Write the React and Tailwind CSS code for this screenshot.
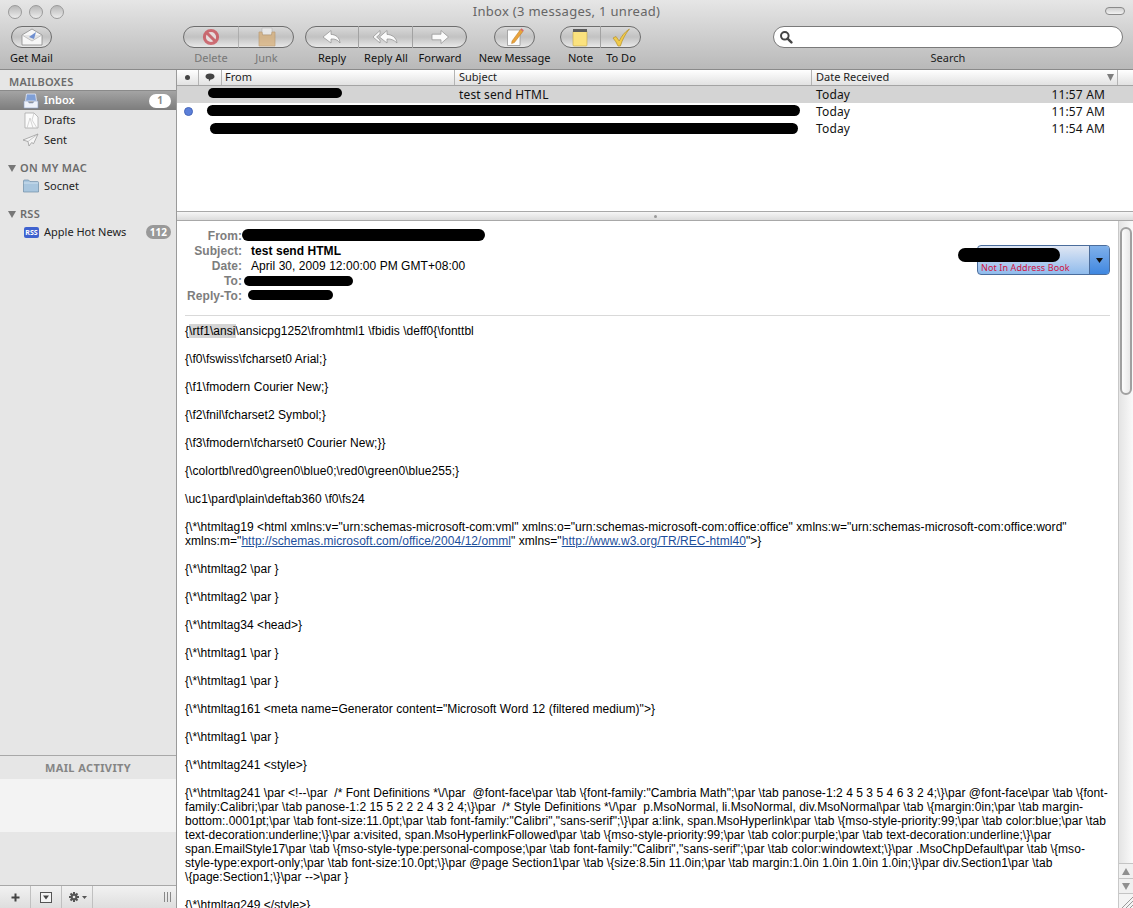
import React from "react";

const uiFont = "font-['Noto_Sans','Open_Sans',sans-serif]";

const bodyParagraphs = [
  ["{\\f0\\fswiss\\fcharset0 Arial;}"],
  ["{\\f1\\fmodern Courier New;}"],
  ["{\\f2\\fnil\\fcharset2 Symbol;}"],
  ["{\\f3\\fmodern\\fcharset0 Courier New;}}"],
  ["{\\colortbl\\red0\\green0\\blue0;\\red0\\green0\\blue255;}"],
  ["\\uc1\\pard\\plain\\deftab360 \\f0\\fs24"],
];

const afterLinks = [
  ["{\\*\\htmltag2 \\par }"],
  ["{\\*\\htmltag2 \\par }"],
  ["{\\*\\htmltag34 <head>}"],
  ["{\\*\\htmltag1 \\par }"],
  ["{\\*\\htmltag1 \\par }"],
  ['{\\*\\htmltag161 <meta name=Generator content="Microsoft Word 12 (filtered medium)">}'],
  ["{\\*\\htmltag1 \\par }"],
  ["{\\*\\htmltag241 <style>}"],
  [
    '{\\*\\htmltag241 \\par <!--\\par  /* Font Definitions *\\/\\par  @font-face\\par \\tab \\{font-family:"Cambria Math";\\par \\tab panose-1:2 4 5 3 5 4 6 3 2 4;\\}\\par @font-face\\par \\tab \\{font-',
    "family:Calibri;\\par \\tab panose-1:2 15 5 2 2 2 4 3 2 4;\\}\\par  /* Style Definitions *\\/\\par  p.MsoNormal, li.MsoNormal, div.MsoNormal\\par \\tab \\{margin:0in;\\par \\tab margin-",
    'bottom:.0001pt;\\par \\tab font-size:11.0pt;\\par \\tab font-family:"Calibri","sans-serif";\\}\\par a:link, span.MsoHyperlink\\par \\tab \\{mso-style-priority:99;\\par \\tab color:blue;\\par \\tab',
    "text-decoration:underline;\\}\\par a:visited, span.MsoHyperlinkFollowed\\par \\tab \\{mso-style-priority:99;\\par \\tab color:purple;\\par \\tab text-decoration:underline;\\}\\par",
    'span.EmailStyle17\\par \\tab \\{mso-style-type:personal-compose;\\par \\tab font-family:"Calibri","sans-serif";\\par \\tab color:windowtext;\\}\\par .MsoChpDefault\\par \\tab \\{mso-',
    "style-type:export-only;\\par \\tab font-size:10.0pt;\\}\\par @page Section1\\par \\tab \\{size:8.5in 11.0in;\\par \\tab margin:1.0in 1.0in 1.0in 1.0in;\\}\\par div.Section1\\par \\tab",
    "\\{page:Section1;\\}\\par -->\\par }",
  ],
  ["{\\*\\htmltag249 </style>}"],
];

// toolbar icons
const GetMailIcon = () => (
  <svg width="22" height="18" viewBox="0 0 22 18">
    <path d="M1 7 L11 1 L21 7 V17 H1 Z" fill="#f7f7f7" stroke="#8c8c8c" strokeWidth="0.8" />
    <path d="M1 7 L11 13 L21 7" fill="#e4e4e4" stroke="#b0b0b0" strokeWidth="0.7" />
    <path d="M8 9 L15 4 L13 11 Z" fill="#6f8fd0" />
  </svg>
);

const DeleteIcon = () => (
  <svg width="18" height="18" viewBox="0 0 18 18">
    <circle cx="9" cy="9" r="6.6" fill="#f3e6e6" stroke="#c9404a" strokeWidth="3" />
    <path d="M4.5 4.5 L13.5 13.5" stroke="#c9404a" strokeWidth="3" />
  </svg>
);

const JunkIcon = () => (
  <svg width="20" height="20" viewBox="0 0 20 20">
    <path d="M5 1 H15 V8 H5 Z" fill="#f2f2f2" stroke="#a8a8a8" strokeWidth="0.6" />
    <path d="M2 5 L5 5 L5.5 8 H14.5 L15 5 L18 5 V19 H2 Z" fill="#d9ae74" stroke="#b58b54" strokeWidth="0.7" />
  </svg>
);

const ReplyIcon = () => (
  <svg width="24" height="16" viewBox="0 0 24 16">
    <path d="M11 1.5 L3 8 L11 14 V10 C15 9.6 18 11 20 14 C19.6 8.6 16 5.6 11 5.4 Z" fill="#fbfbfb" stroke="#8f8f8f" strokeWidth="0.7" />
  </svg>
);

const ReplyAllIcon = () => (
  <svg width="28" height="16" viewBox="0 0 28 16">
    <path d="M8 1.5 L1 8 L8 14 V11 L4.6 8 L8 5 Z" fill="#fbfbfb" stroke="#8f8f8f" strokeWidth="0.7" />
    <path d="M15 1.5 L7.5 8 L15 14 V10 C19 9.6 22 11 25 14 C24.4 8.6 20 5.6 15 5.4 Z" fill="#fbfbfb" stroke="#8f8f8f" strokeWidth="0.7" />
  </svg>
);

const ForwardIcon = () => (
  <svg width="20" height="16" viewBox="0 0 20 16">
    <path d="M11 1.5 L18.5 8 L11 14.5 V10.8 H2 V5.2 H11 Z" fill="#fbfbfb" stroke="#8f8f8f" strokeWidth="0.7" />
  </svg>
);

const NewMessageIcon = () => (
  <svg width="20" height="20" viewBox="0 0 20 20">
    <path d="M2.5 3 H15 V18.5 H2.5 Z" fill="#fdfdfd" stroke="#8c8c8c" strokeWidth="0.7" />
    <path d="M7 14 L15.5 2.5 L18 4.4 L9.4 15.6 L6.6 16.6 Z" fill="#e9a33c" stroke="#b87a26" strokeWidth="0.5" />
    <path d="M15.5 2.5 L18 4.4 L18.8 3.2 L16.4 1.3 Z" fill="#d8636a" />
  </svg>
);

const NoteIcon = () => (
  <svg width="16" height="19" viewBox="0 0 16 19">
    <rect x="1" y="3" width="14" height="15" rx="1" fill="#fbe27e" stroke="#c4a94e" strokeWidth="0.6" />
    <rect x="1" y="1" width="14" height="3" fill="#5d5d5d" />
  </svg>
);

const TodoIcon = () => (
  <svg width="20" height="19" viewBox="0 0 20 19">
    <path d="M2 10 L5 8.5 L8.2 13 C10.6 8 13.6 4 18.4 1 C14.4 6 11.4 11.4 9.4 18 L7 18 C5.8 15 4 12.2 2 10 Z" fill="#f1cb4a" stroke="#b58f2a" strokeWidth="0.7" />
  </svg>
);

const Segment = ({ width, label, disabled, divider, children }) => (
  <div className="flex flex-col items-center" style={{ width }}>
    <div className={`h-[22px] w-full flex items-center justify-center ${divider ? "border-r border-[#a2a2a2]" : ""} ${disabled ? "opacity-70" : ""}`}>
      {children}
    </div>
    <div className="w-0 flex justify-center mt-[3px]">
      <span className={`whitespace-nowrap text-[11px] leading-[14px] ${disabled ? "text-[#777]" : "text-[#111]"}`}>{label}</span>
    </div>
  </div>
);

const ToolGroup = ({ width, className, children }) => (
  <div className={`relative ${className}`} style={{ width }}>
    <div className="absolute left-0 right-0 top-0 h-[22px] rounded-full border border-[#6e6e6e] bg-linear-to-b from-[#d8d8d8] via-[#c2c2c2] to-[#e8e8e8]" />
    <div className="relative flex">{children}</div>
  </div>
);

const Toolbar = () => (
  <div className={`h-[70px] shrink-0 flex flex-col border-b border-[#8a8a8a] bg-linear-to-b from-[#e6e6e6] to-[#b9b9b9] ${uiFont}`}>
    <div className="h-[26px] flex justify-between">
      <div className="flex-1 flex gap-[7px] pl-[8px] pt-[5px]">
        <div className="w-[14px] h-[14px] rounded-full border border-[#9a9a9a] bg-linear-to-b from-[#b8b8b8] to-[#ececec]" />
        <div className="w-[14px] h-[14px] rounded-full border border-[#9a9a9a] bg-linear-to-b from-[#b8b8b8] to-[#ececec]" />
        <div className="w-[14px] h-[14px] rounded-full border border-[#9a9a9a] bg-linear-to-b from-[#b8b8b8] to-[#ececec]" />
      </div>
      <div className="pt-[3px] text-[13px] leading-[16px] tracking-[0.3px] text-[#666] whitespace-nowrap">Inbox (3 messages, 1 unread)</div>
      <div className="flex-1 flex justify-end pr-[8px] pt-[7px]">
        <div className="w-[20px] h-[8px] rounded-full border border-[#8a8a8a] bg-linear-to-b from-[#cfcfcf] to-[#f2f2f2]" />
      </div>
    </div>
    <div className="flex pl-[11px]">
      <ToolGroup width={41}>
        <Segment width={41} label="Get Mail"><GetMailIcon /></Segment>
      </ToolGroup>
      <ToolGroup width={111} className="ml-[131px]">
        <Segment width={56} label="Delete" disabled divider><DeleteIcon /></Segment>
        <Segment width={55} label="Junk" disabled><JunkIcon /></Segment>
      </ToolGroup>
      <ToolGroup width={162} className="ml-[11px]">
        <Segment width={54} label="Reply" divider><ReplyIcon /></Segment>
        <Segment width={54} label="Reply All" divider><ReplyAllIcon /></Segment>
        <Segment width={54} label="Forward"><ForwardIcon /></Segment>
      </ToolGroup>
      <ToolGroup width={41} className="ml-[27px]">
        <Segment width={41} label="New Message"><NewMessageIcon /></Segment>
      </ToolGroup>
      <ToolGroup width={81} className="ml-[25px]">
        <Segment width={41} label="Note" divider><NoteIcon /></Segment>
        <Segment width={40} label="To Do"><TodoIcon /></Segment>
      </ToolGroup>
      {/* search */}
      <div className="ml-[132px] w-[350px] flex flex-col items-center">
        <div className="w-full h-[22px] rounded-full border border-[#7a7a7a] bg-white flex items-center pl-[5px]">
          <svg width="14" height="14" viewBox="0 0 14 14">
            <circle cx="5.8" cy="5.8" r="3.8" fill="none" stroke="#444" strokeWidth="2" />
            <path d="M8.6 8.6 L12.4 12.4" stroke="#444" strokeWidth="2.4" strokeLinecap="round" />
          </svg>
        </div>
        <span className="mt-[3px] text-[11px] leading-[14px] text-[#222]">Search</span>
      </div>
    </div>
  </div>
);

// sidebar icons
const InboxIcon = () => (
  <svg width="16" height="16" viewBox="0 0 16 16">
    <path d="M3.5 1 H12.5 L13.5 8 H2.5 Z" fill="#7f9fd6" stroke="#e8eefa" strokeWidth="0.8" />
    <path d="M1 8 H5 L6 10 H10 L11 8 H15 V15 H1 Z" fill="#eef2fa" stroke="#8aa0c8" strokeWidth="0.6" />
  </svg>
);

const DraftsIcon = () => (
  <svg width="15" height="17" viewBox="0 0 15 17">
    <path d="M1 1 H10 L14 5 V16 H1 Z" fill="#fbfbfb" stroke="#a0a0a0" strokeWidth="0.7" />
    <path d="M3 16 L6 6 L9 16 M10 1 L8 8 L13 16" fill="none" stroke="#c4c4c4" strokeWidth="0.7" />
  </svg>
);

const SentIcon = () => (
  <svg width="17" height="14" viewBox="0 0 17 14">
    <path d="M16 1 L1 7 L6 8.5 L7 13 L9.6 9.6 L11.6 10.6 Z" fill="#f6f6f6" stroke="#8f8f8f" strokeWidth="0.7" />
    <path d="M16 1 L6 8.5" stroke="#a8a8a8" strokeWidth="0.6" />
  </svg>
);

const FolderIcon = () => (
  <svg width="16" height="14" viewBox="0 0 16 14">
    <path d="M0.5 2 Q0.5 1 1.5 1 H5.5 L7 2.6 H14.5 Q15.5 2.6 15.5 3.6 V13 H0.5 Z" fill="#a9c6de" stroke="#6f8ca6" strokeWidth="0.7" />
    <path d="M0.8 4 H15.2" stroke="#d9e7f2" strokeWidth="0.8" />
  </svg>
);

const RssIcon = () => (
  <div className="w-[15px] h-[11px] rounded-[2px] bg-[#3f62cf] flex items-center justify-center text-[7px] leading-none font-bold text-white">RSS</div>
);

const Disclosure = () => (
  <svg width="8" height="7" viewBox="0 0 8 7" className="shrink-0">
    <path d="M0 0 H8 L4 7 Z" fill="#777" />
  </svg>
);

const SectionHead = ({ children }) => (
  <div className="h-[18px] flex items-center gap-[4px] pl-[8px] text-[11px] font-semibold tracking-[0.3px] text-[#6c6c6c]">
    <Disclosure />
    {children}
  </div>
);

const Badge = ({ children, light }) => (
  <span className={`ml-auto mr-[5px] h-[14px] rounded-full flex items-center text-[10px] font-bold ${light ? "px-[8px] bg-white text-[#8a8a8a]" : "px-[4px] bg-[#999] text-white"}`}>
    {children}
  </span>
);

const SidebarItem = ({ icon, label, badge, selected, height }) => (
  <div
    className={`flex items-center text-[11px] ${selected ? "bg-linear-to-b from-[#a4a4a4] to-[#7d7d7d] border-t border-[#8a8a8a] text-white font-semibold" : "text-[#222]"}`}
    style={{ height }}
  >
    <div className="w-[44px] shrink-0 flex justify-end pr-[5px]">{icon}</div>
    <span className="whitespace-nowrap">{label}</span>
    {badge}
  </div>
);

const Sidebar = () => (
  <div className={`w-[177px] shrink-0 flex flex-col border-r border-[#9a9a9a] bg-[#e6e6e6] ${uiFont}`}>
    <div className="h-[20px] flex items-end pl-[9px] text-[11px] font-semibold tracking-[0.2px] text-[#6c6c6c]">MAILBOXES</div>
    <SidebarItem icon={<InboxIcon />} label="Inbox" selected height={20} badge={<Badge light>1</Badge>} />
    <SidebarItem icon={<DraftsIcon />} label="Drafts" height={20} />
    <SidebarItem icon={<SentIcon />} label="Sent" height={20} />
    <div className="mt-[9px]"><SectionHead>ON MY MAC</SectionHead></div>
    <SidebarItem icon={<FolderIcon />} label="Socnet" height={18} />
    <div className="mt-[10px]"><SectionHead>RSS</SectionHead></div>
    <SidebarItem icon={<RssIcon />} label="Apple Hot News" height={18} badge={<Badge>112</Badge>} />
    <div className="flex-1" />
    <div className="h-[24px] pt-[1px] border-t border-[#a8a8a8] flex items-center justify-center text-[11px] font-bold tracking-[0.4px] text-[#858585]">MAIL ACTIVITY</div>
    <div className="h-[53px] bg-[#f3f3f3]" />
    <div className="h-[53px]" />
    <div className="h-[23px] flex border-t border-[#a8a8a8] bg-linear-to-b from-[#f2f2f2] to-[#dedede]">
      <div className="w-[31px] flex items-center justify-center border-r border-[#c0c0c0]">
        <svg width="9" height="9" viewBox="0 0 9 9"><path d="M4.5 0.5 V8.5 M0.5 4.5 H8.5" stroke="#444" strokeWidth="2" /></svg>
      </div>
      <div className="w-[31px] flex items-center justify-center border-r border-[#c0c0c0]">
        <svg width="12" height="11" viewBox="0 0 12 11">
          <rect x="0.5" y="0.5" width="11" height="10" fill="#f4f4f4" stroke="#555" />
          <path d="M3 3.5 H9 L6 7.5 Z" fill="#444" />
        </svg>
      </div>
      <div className="w-[31px] flex items-center justify-center gap-[2px] border-r border-[#c0c0c0]">
        <svg width="12" height="12" viewBox="0 0 12 12">
          <path d="M6 1 V11 M1 6 H11 M2.5 2.5 L9.5 9.5 M9.5 2.5 L2.5 9.5" stroke="#555" strokeWidth="2" />
          <circle cx="6" cy="6" r="3.4" fill="#555" />
          <circle cx="6" cy="6" r="1.3" fill="#e8e8e8" />
        </svg>
        <svg width="5" height="3" viewBox="0 0 5 3"><path d="M0 0 H5 L2.5 3 Z" fill="#555" /></svg>
      </div>
      <div className="flex-1 flex items-center justify-end pr-[5px]">
        <svg width="7" height="10" viewBox="0 0 7 10"><path d="M0.5 0 V10 M3.5 0 V10 M6.5 0 V10" stroke="#888" /></svg>
      </div>
    </div>
  </div>
);

const HeaderCell = ({ width, children, className }) => (
  <div className={`h-full flex items-center border-r border-[#b4b4b4] ${className || ""}`} style={{ width }}>
    {children}
  </div>
);

const MessageRow = ({ selected, unread, subject, date, time }) => (
  <div className={`h-[17px] flex items-center text-[12px] tracking-[0.15px] text-[#111] pr-[28px] ${selected ? "bg-[#d4d4d4]" : ""}`}>
    <div className="w-[278px] shrink-0 flex pl-[7px]">
      {unread && <div className="w-[9px] h-[9px] rounded-full bg-[#5b7fd9] border border-[#4666b8]" />}
    </div>
    <div className="w-[357px] shrink-0 pl-[4px]">{subject}</div>
    <div className="pl-[4px]">{date}</div>
    <div className="ml-auto">{time}</div>
  </div>
);

const MessageList = () => (
  <div className={`relative h-[142px] shrink-0 bg-white border-b border-[#a8a8a8] ${uiFont}`}>
    <div className="h-[16px] flex items-center border-b border-[#a4a4a4] bg-linear-to-b from-[#ffffff] to-[#e2e2e2] text-[11px] text-[#222]">
      <HeaderCell width={22} className="justify-center">
        <div className="w-[5px] h-[5px] rounded-full bg-[#444]" />
      </HeaderCell>
      <HeaderCell width={23} className="justify-center">
        <svg width="10" height="9" viewBox="0 0 10 9"><path d="M5 0.5 C7.8 0.5 9.5 1.8 9.5 3.5 C9.5 5.2 7.8 6.4 5.6 6.4 L4 8.6 L3.8 6.3 C1.8 6 0.5 5 0.5 3.5 C0.5 1.8 2.2 0.5 5 0.5 Z" fill="#444" /></svg>
      </HeaderCell>
      <HeaderCell width={233} className="pl-[3px]">From</HeaderCell>
      <HeaderCell width={357} className="pl-[4px]">Subject</HeaderCell>
      <HeaderCell width={306} className="pl-[4px] justify-between pr-[3px]">
        Date Received
        <svg width="7" height="7" viewBox="0 0 7 7"><path d="M0 0 H7 L3.5 7 Z" fill="#7d7d7d" /></svg>
      </HeaderCell>
    </div>
    <MessageRow selected subject="test send HTML" date="Today" time="11:57 AM" />
    <MessageRow unread date="Today" time="11:57 AM" />
    <MessageRow date="Today" time="11:54 AM" />
    {/* redacted senders */}
    <div className="absolute left-[31px] top-[18px] w-[134px] h-[10px] rounded-full bg-black" />
    <div className="absolute left-[30px] top-[35px] w-[593px] h-[11px] rounded-full bg-black" />
    <div className="absolute left-[33px] top-[53px] w-[588px] h-[11px] rounded-full bg-black" />
  </div>
);

const Splitter = () => (
  <div className="h-[9px] shrink-0 flex items-center justify-center border-b border-[#a8a8a8] bg-linear-to-b from-[#f6f6f6] to-[#dcdcdc]">
    <div className="w-[3px] h-[3px] rounded-full bg-[#9a9a9a]" />
  </div>
);

const HeaderRow = ({ label, children }) => (
  <div className="h-[15px] flex items-center text-[12px]">
    <div className="w-[57px] text-right font-bold text-[#7d7d7d] whitespace-nowrap">{label}</div>
    <div className="pl-[9px] text-black whitespace-nowrap">{children}</div>
  </div>
);

const Para = ({ lines }) => (
  <div className="mb-[14px]">
    {lines.map((line, i) => (
      <div key={i} className="h-[14px] whitespace-pre">{line}</div>
    ))}
  </div>
);

const MessagePane = () => (
  <div className="flex-1 min-h-0 flex bg-white">
    <div className="relative flex-1 min-w-0 overflow-hidden pl-[8px] pr-[8px] pt-[7px] tracking-[0.05px] font-['Liberation_Sans',sans-serif] text-black">
      <HeaderRow label="From:" />
      <HeaderRow label="Subject:"><span className="font-bold">test send HTML</span></HeaderRow>
      <HeaderRow label="Date:">April 30, 2009 12:00:00 PM GMT+08:00</HeaderRow>
      <HeaderRow label="To:" />
      <HeaderRow label="Reply-To:" />
      <div className="h-[1px] mt-[12px] mb-[8px] bg-[#d9d9d9]" />
      <div className="text-[12px] leading-[14px]">
        <Para
          lines={[
            <>
              {"{"}
              <span className="bg-[#d4d4d4]">{"\\rtf1\\ansi"}</span>
              {"\\ansicpg1252\\fromhtml1 \\fbidis \\deff0{\\fonttbl"}
            </>,
          ]}
        />
        {bodyParagraphs.map((lines, i) => (
          <Para key={i} lines={lines} />
        ))}
        <Para
          lines={[
            '{\\*\\htmltag19 <html xmlns:v="urn:schemas-microsoft-com:vml" xmlns:o="urn:schemas-microsoft-com:office:office" xmlns:w="urn:schemas-microsoft-com:office:word"',
            <>
              {'xmlns:m="'}
              <a href="#" className="text-[#1d4f9c] underline">http://schemas.microsoft.com/office/2004/12/omml</a>
              {'" xmlns="'}
              <a href="#" className="text-[#1d4f9c] underline">http://www.w3.org/TR/REC-html40</a>
              {'">}'}
            </>,
          ]}
        />
        {afterLinks.map((lines, i) => (
          <Para key={i} lines={lines} />
        ))}
      </div>
      {/* redactions over the header values */}
      <div className="absolute left-[65px] top-[8px] w-[243px] h-[12px] rounded-full bg-black" />
      <div className="absolute left-[67px] top-[55px] w-[109px] h-[10px] rounded-full bg-black" />
      <div className="absolute left-[71px] top-[69px] w-[85px] h-[10px] rounded-full bg-black" />
      {/* address book pill */}
      <div className={`absolute left-[800px] top-[24px] w-[133px] h-[30px] rounded-[4px] border border-[#4b6d9c] bg-linear-to-b from-[#dfe6f3] to-[#8fbbec] flex ${uiFont}`}>
        <div className="flex-1 flex items-end pl-[3px] text-[9px] tracking-[0.1px] leading-[13px] text-[#d1123f]">Not In Address Book</div>
        <div className="w-[20px] flex items-center justify-center rounded-r-[3px] border-l border-[#4b6d9c] bg-linear-to-b from-[#7fb0ea] to-[#3f87e0]">
          <svg width="7" height="5" viewBox="0 0 7 5"><path d="M0 0 H7 L3.5 5 Z" fill="#111" /></svg>
        </div>
      </div>
      <div className="absolute left-[781px] top-[27px] w-[102px] h-[14px] rounded-full bg-black" />
    </div>
    {/* scrollbar */}
    <div className="w-[15px] shrink-0 flex flex-col border-l border-[#c8c8c8] bg-linear-to-r from-[#e4e4e4] to-[#fafafa]">
      <div className="flex-1 relative">
        <div className="absolute left-[1px] right-[1px] top-[6px] h-[168px] rounded-full border-2 border-[#a0a0a0] bg-linear-to-r from-[#fdfdfd] to-[#e8e8e8]" />
      </div>
      <div className="h-[15px] flex items-center justify-center border-t border-[#c4c4c4] bg-[#f0f0f0]">
        <svg width="8" height="7" viewBox="0 0 8 7"><path d="M4 0 L8 7 H0 Z" fill="#8f8f8f" /></svg>
      </div>
      <div className="h-[15px] flex items-center justify-center border-t border-[#c4c4c4] bg-[#f0f0f0]">
        <svg width="8" height="7" viewBox="0 0 8 7"><path d="M0 0 H8 L4 7 Z" fill="#8f8f8f" /></svg>
      </div>
      <div className="h-[15px] flex items-end justify-end border-t border-[#c4c4c4] bg-[#f4f4f4]">
        <svg width="12" height="12" viewBox="0 0 12 12"><path d="M12 1 L1 12 M12 5 L5 12 M12 9 L9 12" stroke="#9a9a9a" /></svg>
      </div>
    </div>
  </div>
);

export default function App() {
  return (
    <div className="w-[1133px] h-[908px] flex flex-col overflow-hidden bg-white">
      <Toolbar />
      <div className="flex-1 min-h-0 flex">
        <Sidebar />
        <div className="flex-1 min-w-0 flex flex-col">
          <MessageList />
          <Splitter />
          <MessagePane />
        </div>
      </div>
    </div>
  );
}
